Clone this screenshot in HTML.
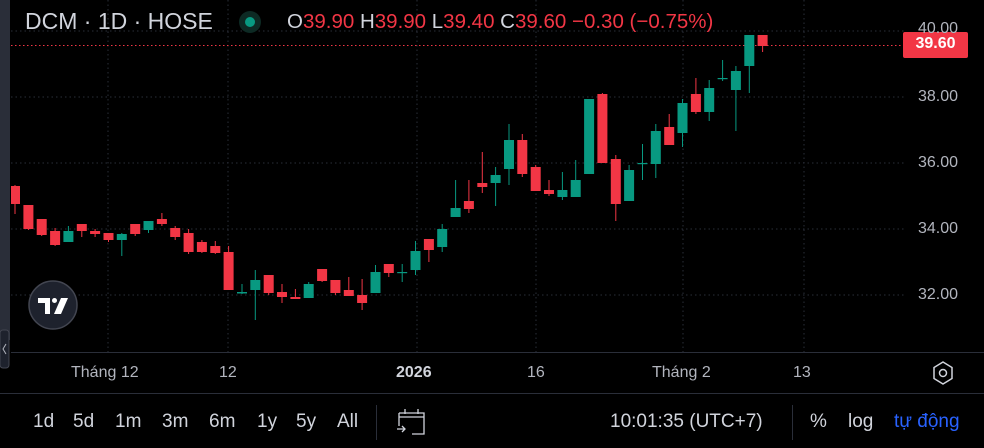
<!DOCTYPE html>
<html><head><meta charset="utf-8"><style>
html,body{margin:0;padding:0;background:#000;width:984px;height:448px;overflow:hidden;font-family:"Liberation Sans",sans-serif;}
.t{position:absolute;white-space:nowrap;}
.b{position:absolute;top:411px;font-size:19px;color:#d1d4dc;white-space:nowrap;}
</style></head><body>
<svg width="984" height="448" style="position:absolute;left:0;top:0" xmlns="http://www.w3.org/2000/svg">
<rect x="0" y="0" width="10" height="340" fill="#2a2e39"/>
<rect x="0" y="330" width="9" height="38" rx="3" fill="#1e222d" stroke="#434651"/>
<path d="M6 344 L3 349 L6 354" stroke="#b2b5be" fill="none" stroke-width="1"/>
<g stroke="#2a2e39" stroke-dasharray="1.5 3" stroke-width="1">
<line x1="11" y1="31" x2="905" y2="31"/><line x1="11" y1="97" x2="905" y2="97"/><line x1="11" y1="163" x2="905" y2="163"/><line x1="11" y1="229" x2="905" y2="229"/><line x1="11" y1="295" x2="905" y2="295"/>
<line x1="108" y1="0" x2="108" y2="352"/><line x1="228" y1="0" x2="228" y2="352"/><line x1="417" y1="0" x2="417" y2="352"/><line x1="536" y1="0" x2="536" y2="352"/><line x1="683" y1="0" x2="683" y2="352"/><line x1="804" y1="0" x2="804" y2="352"/>
</g>
<line x1="11" y1="45.5" x2="905" y2="45.5" stroke="#f23645" stroke-dasharray="1.5 2.5" stroke-width="1"/>
<line x1="11" y1="352.5" x2="984" y2="352.5" stroke="#2a2e39"/>
<line x1="0" y1="393.5" x2="984" y2="393.5" stroke="#2a2e39"/>
<line x1="376.5" y1="405" x2="376.5" y2="440" stroke="#2a2e39"/>
<line x1="792.5" y1="405" x2="792.5" y2="440" stroke="#2a2e39"/>
<g stroke-width="1">
<g fill="#f23645" stroke="#f23645">
<line x1="15" y1="185" x2="15" y2="214"/><rect x="11" y="186" width="9" height="18" stroke="none"/>
<line x1="28.4" y1="205" x2="28.4" y2="230"/><rect x="23.4" y="205" width="10" height="24" stroke="none"/>
<line x1="41.7" y1="219" x2="41.7" y2="236"/><rect x="36.7" y="219" width="10" height="16" stroke="none"/>
<line x1="55.1" y1="228" x2="55.1" y2="246"/><rect x="50.1" y="231" width="10" height="14" stroke="none"/>
<line x1="81.8" y1="224" x2="81.8" y2="237"/><rect x="76.8" y="224" width="10" height="7" stroke="none"/>
<line x1="95.1" y1="229" x2="95.1" y2="237"/><rect x="90.1" y="231" width="10" height="3" stroke="none"/>
<line x1="108.5" y1="233" x2="108.5" y2="242"/><rect x="103.5" y="233" width="10" height="7" stroke="none"/>
<line x1="135.2" y1="224" x2="135.2" y2="236"/><rect x="130.2" y="224" width="10" height="10" stroke="none"/>
<line x1="161.9" y1="213" x2="161.9" y2="226"/><rect x="156.9" y="219" width="10" height="5" stroke="none"/>
<line x1="175.2" y1="226" x2="175.2" y2="240"/><rect x="170.2" y="228" width="10" height="9" stroke="none"/>
<line x1="188.6" y1="229" x2="188.6" y2="254"/><rect x="183.6" y="233" width="10" height="19" stroke="none"/>
<line x1="201.9" y1="240" x2="201.9" y2="253"/><rect x="196.9" y="242" width="10" height="10" stroke="none"/>
<line x1="215.3" y1="241" x2="215.3" y2="254"/><rect x="210.3" y="246" width="10" height="7" stroke="none"/>
<line x1="228.6" y1="246" x2="228.6" y2="290"/><rect x="223.6" y="252" width="10" height="38" stroke="none"/>
<line x1="268.7" y1="275" x2="268.7" y2="295"/><rect x="263.7" y="275" width="10" height="18" stroke="none"/>
<line x1="282" y1="284" x2="282" y2="303"/><rect x="277" y="292" width="10" height="5" stroke="none"/>
<line x1="295.4" y1="289" x2="295.4" y2="299"/><rect x="290.4" y="297" width="10" height="2" stroke="none"/>
<line x1="322.1" y1="269" x2="322.1" y2="282"/><rect x="317.1" y="269" width="10" height="12" stroke="none"/>
<line x1="335.4" y1="280" x2="335.4" y2="295"/><rect x="330.4" y="280" width="10" height="13" stroke="none"/>
<line x1="348.8" y1="277" x2="348.8" y2="296"/><rect x="343.8" y="290" width="10" height="6" stroke="none"/>
<line x1="362.1" y1="279" x2="362.1" y2="310"/><rect x="357.1" y="295" width="10" height="8" stroke="none"/>
<line x1="388.8" y1="264" x2="388.8" y2="277"/><rect x="383.8" y="264" width="10" height="9" stroke="none"/>
<line x1="428.9" y1="239" x2="428.9" y2="262"/><rect x="423.9" y="239" width="10" height="11" stroke="none"/>
<line x1="468.9" y1="180" x2="468.9" y2="213"/><rect x="463.9" y="201" width="10" height="8" stroke="none"/>
<line x1="482.3" y1="152" x2="482.3" y2="193"/><rect x="477.3" y="183" width="10" height="4" stroke="none"/>
<line x1="522.3" y1="134" x2="522.3" y2="177"/><rect x="517.3" y="140" width="10" height="34" stroke="none"/>
<line x1="535.7" y1="165" x2="535.7" y2="191"/><rect x="530.7" y="167" width="10" height="24" stroke="none"/>
<line x1="549" y1="180" x2="549" y2="196"/><rect x="544" y="190" width="10" height="4" stroke="none"/>
<line x1="602.4" y1="93" x2="602.4" y2="163"/><rect x="597.4" y="94" width="10" height="69" stroke="none"/>
<line x1="615.8" y1="155" x2="615.8" y2="221"/><rect x="610.8" y="159" width="10" height="45" stroke="none"/>
<line x1="669.2" y1="114" x2="669.2" y2="145"/><rect x="664.2" y="127" width="10" height="18" stroke="none"/>
<line x1="695.9" y1="78" x2="695.9" y2="114"/><rect x="690.9" y="94" width="10" height="18" stroke="none"/>
<line x1="762.6" y1="35" x2="762.6" y2="52"/><rect x="757.6" y="35" width="10" height="11" stroke="none"/>
</g>
<g fill="#089981" stroke="#089981">
<line x1="68.4" y1="226" x2="68.4" y2="242"/><rect x="63.4" y="231" width="10" height="11" stroke="none"/>
<line x1="121.8" y1="233" x2="121.8" y2="256"/><rect x="116.8" y="234" width="10" height="6" stroke="none"/>
<line x1="148.5" y1="221" x2="148.5" y2="233"/><rect x="143.5" y="221" width="10" height="9" stroke="none"/>
<line x1="242" y1="284" x2="242" y2="294"/><rect x="237" y="292" width="10" height="1.5" stroke="none"/>
<line x1="255.3" y1="270" x2="255.3" y2="320"/><rect x="250.3" y="280" width="10" height="10" stroke="none"/>
<line x1="308.7" y1="282" x2="308.7" y2="298"/><rect x="303.7" y="284" width="10" height="14" stroke="none"/>
<line x1="375.5" y1="265" x2="375.5" y2="293"/><rect x="370.5" y="272" width="10" height="21" stroke="none"/>
<line x1="402.2" y1="264" x2="402.2" y2="282"/><rect x="397.2" y="272" width="10" height="1.2" stroke="none"/>
<line x1="415.5" y1="241" x2="415.5" y2="275"/><rect x="410.5" y="251" width="10" height="19" stroke="none"/>
<line x1="442.2" y1="224" x2="442.2" y2="252"/><rect x="437.2" y="229" width="10" height="18" stroke="none"/>
<line x1="455.6" y1="180" x2="455.6" y2="216"/><rect x="450.6" y="208" width="10" height="9" stroke="none"/>
<line x1="495.6" y1="167" x2="495.6" y2="206"/><rect x="490.6" y="175" width="10" height="8" stroke="none"/>
<line x1="509" y1="124" x2="509" y2="185"/><rect x="504" y="140" width="10" height="29" stroke="none"/>
<line x1="562.4" y1="172" x2="562.4" y2="200"/><rect x="557.4" y="190" width="10" height="7" stroke="none"/>
<line x1="575.7" y1="160" x2="575.7" y2="197"/><rect x="570.7" y="180" width="10" height="17" stroke="none"/>
<line x1="589.1" y1="99" x2="589.1" y2="174"/><rect x="584.1" y="99" width="10" height="75" stroke="none"/>
<line x1="629.1" y1="165" x2="629.1" y2="201"/><rect x="624.1" y="170" width="10" height="31" stroke="none"/>
<line x1="642.5" y1="144" x2="642.5" y2="180"/><rect x="637.5" y="163" width="10" height="1.2" stroke="none"/>
<line x1="655.8" y1="124" x2="655.8" y2="178"/><rect x="650.8" y="131" width="10" height="33" stroke="none"/>
<line x1="682.5" y1="99" x2="682.5" y2="147"/><rect x="677.5" y="103" width="10" height="30" stroke="none"/>
<line x1="709.2" y1="80" x2="709.2" y2="121"/><rect x="704.2" y="88" width="10" height="24" stroke="none"/>
<line x1="722.6" y1="60" x2="722.6" y2="81"/><rect x="717.6" y="78" width="10" height="1.2" stroke="none"/>
<line x1="735.9" y1="66" x2="735.9" y2="131"/><rect x="730.9" y="71" width="10" height="19" stroke="none"/>
<line x1="749.3" y1="35" x2="749.3" y2="93"/><rect x="744.3" y="35" width="10" height="31" stroke="none"/>
</g>
</g>
<circle cx="53" cy="305" r="24" fill="#1e222d" stroke="#434651" stroke-width="1.5"/>
<path d="M38 298 H50 V314 H45 V303 H38 Z" fill="#fff"/>
<circle cx="54.5" cy="300.5" r="2.5" fill="#fff"/>
<path d="M61 298 H68 L61 314 H54 Z" fill="#fff"/>
<circle cx="250" cy="22" r="11" fill="#0d2a24"/>
<circle cx="250" cy="22" r="5" fill="#089981"/>
<path d="M943 362 L952 367.5 V378.5 L943 384 L934 378.5 V367.5 Z" fill="none" stroke="#d1d4dc" stroke-width="1.5"/>
<circle cx="943" cy="373" r="3.5" fill="none" stroke="#d1d4dc" stroke-width="1.5"/>
<g fill="none" stroke="#d1d4dc" stroke-width="1.3">
<path d="M399 413 H424 V434 H412 M399 413 V426"/><line x1="399" y1="417" x2="424" y2="417"/>
<line x1="405" y1="409" x2="405" y2="414"/><line x1="418" y1="409" x2="418" y2="414"/>
<path d="M397 429 H405 M402 426 L405 429 L402 432"/>
</g>
<rect x="903" y="32" width="65" height="26" rx="2" fill="#f23645"/>
</svg>
<div class="t" style="left:25px;top:8px;font-size:23px;color:#d1d4dc">DCM · 1D · HOSE</div>
<div class="t" style="left:287px;top:10px;font-size:20.5px;color:#f23645"><span style="color:#d1d4dc">O</span>39.90 <span style="color:#d1d4dc">H</span>39.90 <span style="color:#d1d4dc">L</span>39.40 <span style="color:#d1d4dc">C</span>39.60 −0.30 (−0.75%)</div>
<div class="t" style="left:918px;top:20px;font-size:16px;color:#b2b5be">40.00</div>
<div class="t" style="left:903px;top:35px;width:65px;text-align:center;font-size:16px;font-weight:bold;color:#fff">39.60</div>
<div class="t" style="left:918px;top:88px;font-size:16px;color:#b2b5be">38.00</div>
<div class="t" style="left:918px;top:154px;font-size:16px;color:#b2b5be">36.00</div>
<div class="t" style="left:918px;top:220px;font-size:16px;color:#b2b5be">34.00</div>
<div class="t" style="left:918px;top:286px;font-size:16px;color:#b2b5be">32.00</div>
<div class="t" style="left:71px;top:364px;font-size:16px;color:#b2b5be">Tháng 12</div>
<div class="t" style="left:219px;top:364px;font-size:16px;color:#b2b5be">12</div>
<div class="t" style="left:396px;top:364px;font-size:16px;color:#d1d4dc;font-weight:bold">2026</div>
<div class="t" style="left:527px;top:364px;font-size:16px;color:#b2b5be">16</div>
<div class="t" style="left:652px;top:364px;font-size:16px;color:#b2b5be">Tháng 2</div>
<div class="t" style="left:793px;top:364px;font-size:16px;color:#b2b5be">13</div>
<div class="b" style="left:33px">1d</div>
<div class="b" style="left:73px">5d</div>
<div class="b" style="left:115px">1m</div>
<div class="b" style="left:162px">3m</div>
<div class="b" style="left:209px">6m</div>
<div class="b" style="left:257px">1y</div>
<div class="b" style="left:296px">5y</div>
<div class="b" style="left:337px">All</div>
<div class="b" style="left:610px">10:01:35 (UTC+7)</div>
<div class="b" style="left:810px">%</div>
<div class="b" style="left:848px">log</div>
<div class="b" style="left:894px;color:#2962ff">tự động</div>
</body></html>
